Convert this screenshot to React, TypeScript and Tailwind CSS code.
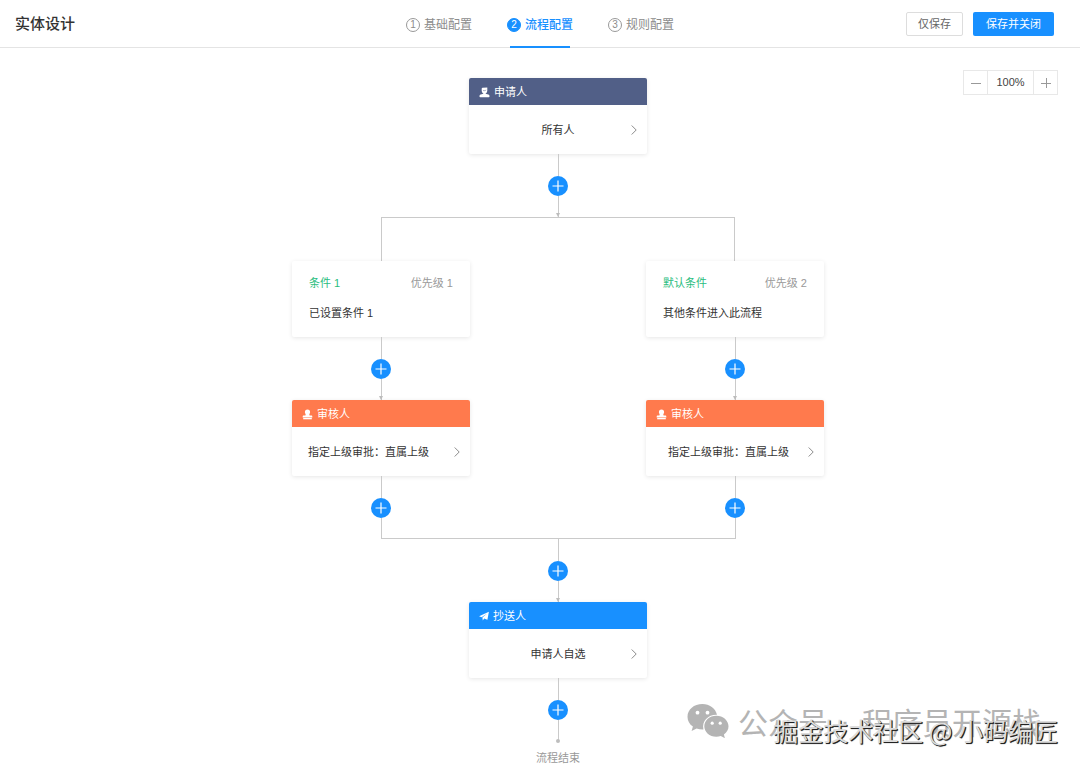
import type { ReactNode } from 'react';

const NODE_WIDTH = 'w-[178px]';

function ApplicantIcon() {
  return (
    <svg viewBox="0 0 11 11" className="size-[11px]" fill="currentColor" aria-hidden="true">
      <path d="M3.600.8 8.300.4v3.200c0 1.600-.9 2.800-1.900 3.200l3 .7c.7.200 1.100.7 1.100 1.400v.6c0 .4-.3.7-.7.7H1.200a.7.700 0 0 1-.7-.7v-.6c0-.7.4-1.200 1.100-1.400l3-.7C3.500 6.400 2.700 5.200 2.700 3.600V1.900c0-.6.3-1 .9-1.100Z" />
      <path d="M4 3.400c1.200.5 2.300.3 3.200-.5" fill="none" stroke="#515f87" strokeWidth=".5" />
    </svg>
  );
}

function StampIcon() {
  return (
    <svg viewBox="0 0 11 11" className="size-[11px]" fill="currentColor" aria-hidden="true">
      <path d="M5.500.6a2.600 2.600 0 0 1 2.600 2.600c0 1-.8 1.700-.8 2.600 0 .4.200.6.600.6h1.400c.6 0 1 .4 1 1v1H.7v-1c0-.6.4-1 1-1h1.400c.4 0 .6-.2.6-.6 0-.9-.8-1.600-.8-2.600A2.600 2.600 0 0 1 5.500.6Z" />
      <path d="M1.200 9h8.600v1.300H1.200z" />
    </svg>
  );
}

function PlaneIcon() {
  return (
    <svg viewBox="0 0 10 10" className="size-[10px]" fill="currentColor" aria-hidden="true">
      <path d="M9.900.8 8.400 8.800 5.200 7.400 3.800 9.500 3.400 6.600 8.200 2.500 2.600 6.200.1 5.200Z" />
    </svg>
  );
}

function Chevron() {
  return (
    <svg viewBox="0 0 6 10" className="h-[10px] w-[6px]" fill="none" stroke="#8c8c8c" aria-hidden="true">
      <path d="M.7.5 5.200 5 .7 9.500" />
    </svg>
  );
}

function Connector({ arrow = false }: { arrow?: boolean }) {
  return (
    <div className="flex h-[63px] flex-col items-center">
      <span className="w-px flex-1 bg-[#cacaca]" />
      <button
        type="button"
        aria-label="添加节点"
        className="flex size-5 items-center justify-center rounded-full bg-[#1890ff] text-white"
      >
        <svg viewBox="0 0 12 12" className="size-3" stroke="currentColor" strokeWidth="1.2" aria-hidden="true">
          <path d="M6 .5v11M.5 6h11" />
        </svg>
      </button>
      <span className="flex w-px flex-1 flex-col items-center justify-end bg-[#cacaca]">
        {arrow && (
          <svg viewBox="0 0 4 4" className="size-1 shrink-0" fill="#bdbdbd" aria-hidden="true">
            <path d="M0 0h4L2 4Z" />
          </svg>
        )}
      </span>
    </div>
  );
}

type Align = 'center' | 'start' | 'indent';

const ALIGN: Record<Align, string> = {
  center: 'justify-center pl-4',
  start: 'justify-start pl-4',
  indent: 'justify-start pl-[22px]',
};

function Node({ title, tone, icon, children, align = 'center' }: {
  title: string;
  tone: string;
  icon: ReactNode;
  children: ReactNode;
  align?: Align;
}) {
  return (
    <section className={`${NODE_WIDTH} rounded-[2px] bg-white shadow-[0_1px_4px_rgba(0,0,0,0.1)]`}>
      <h2 className={`flex h-[27px] items-center gap-1 rounded-t-[2px] px-[10px] pt-px text-[11px] text-white ${tone}`}>
        {icon}
        {title}
      </h2>
      <button type="button" className="flex h-[49px] w-full items-center pt-px pr-[10px] text-[11px] text-[#333]">
        <span className={`flex flex-1 ${ALIGN[align]}`}>{children}</span>
        <Chevron />
      </button>
    </section>
  );
}

function ConditionCard({ name, priority, text }: { name: string; priority: string; text: string }) {
  return (
    <section className={`${NODE_WIDTH} h-[76px] rounded-[2px] bg-white px-[17px] pt-3 text-[11px] shadow-[0_1px_4px_rgba(0,0,0,0.1)]`}>
      <div className="flex h-5 items-center justify-between">
        <h2 className="text-[#2bbd7e]">{name}</h2>
        <span className="text-[#999]">{priority}</span>
      </div>
      <p className="mt-[10px] flex h-5 items-center text-[#333]">{text}</p>
    </section>
  );
}

function Branch({ side, name, priority, text }: {
  side: 'left' | 'right';
  name: string;
  priority: string;
  text: string;
}) {
  const left = side === 'left';
  return (
    <div className="flex w-[354px] flex-col items-center">
      <div className={`flex h-11 w-full ${left ? 'justify-end' : 'justify-start'}`}>
        <span className={`w-1/2 border-t border-[#cacaca] ${left ? 'border-l' : 'border-r'}`} />
      </div>
      <ConditionCard name={name} priority={priority} text={text} />
      <Connector arrow />
      <Node title="审核人" tone="bg-[#ff7a4d]" icon={<StampIcon />} align={left ? 'start' : 'indent'}>
        指定上级审批：直属上级
      </Node>
      <Connector />
      <div className={`-mt-px flex h-px w-full ${left ? 'justify-end' : 'justify-start'}`}>
        <span className="w-1/2 bg-[#cacaca]" />
      </div>
    </div>
  );
}

function Step({ index, label, active = false }: { index: number; label: string; active?: boolean }) {
  return (
    <a
      href="#"
      aria-current={active ? 'step' : undefined}
      className={`flex h-12 flex-col items-center text-xs ${active ? 'font-medium text-[#1890ff]' : 'text-[#8c8c8c]'}`}
    >
      <span className="flex flex-1 items-center gap-1 pt-[3px]">
        <span
          className={`flex size-[14px] items-center justify-center rounded-full border text-[10px] leading-none ${
            active ? 'border-[#1890ff] bg-[#1890ff] text-white' : 'border-[#999]'
          }`}
        >
          {index}
        </span>
        {label}
      </span>
      <span className={`h-[2px] w-[60px] ${active ? 'bg-[#1890ff]' : 'bg-transparent'}`} />
    </a>
  );
}

function Watermark() {
  return (
    <div className="pointer-events-none absolute right-[22px] bottom-[24px] h-[40px] w-[371px] font-['Noto_Sans_CJK_SC',sans-serif]">
      <div className="flex items-start text-[30px] leading-[34px] text-[#b4b4b4]">
        <svg viewBox="0 0 42 34" className="mr-[9px] h-[34px] w-[42px] shrink-0" fill="currentColor" aria-hidden="true">
          <path d="M15.500 0C7 0 .5 5.500.5 12.700c0 4 2 7.500 5.400 9.900L4.600 27l5-2.600c1.900.6 3.900 1 6 1h.8C14.600 16.800 21.500 10.400 30 10.800 28.600 4.300 22.400 0 15.500 0Z" />
          <path d="M29.300 11.800c-6.800 0-12 4.700-12 10.500s5.200 10.500 12 10.500c1.600 0 3.100-.3 4.500-.7l4.100 2.100-1-3.700c2.900-2 4.600-4.900 4.600-8.200 0-5.800-5.400-10.500-12.200-10.500Z" />
          <g fill="white">
            <circle cx="10.500" cy="8.700" r="1.900" />
            <circle cx="20.500" cy="8.700" r="1.900" />
            <circle cx="25.200" cy="19.200" r="1.600" />
            <circle cx="33.200" cy="19.200" r="1.600" />
          </g>
        </svg>
        <span>公众号</span>
        <span className="w-[34px] text-center font-['Liberation_Sans']">·</span>
        <span>程序员开源栈</span>
      </div>
      <p className="absolute right-0 bottom-0 text-[25px] leading-[28px] whitespace-nowrap text-[#dcdcdc] [text-shadow:1px_1px_0_#222,1px_1px_1px_#333]">
        掘金技术社区 @ 小码编匠
      </p>
    </div>
  );
}

export default function App() {
  return (
    <div className="relative min-h-screen overflow-hidden bg-white font-['Liberation_Sans','Noto_Sans_CJK_SC',sans-serif]">
      <header className="grid h-12 grid-cols-[1fr_auto_1fr] border-b border-[#e4e4e4]">
        <h1 className="flex items-center pl-[15px] text-[15px] font-medium text-[#333]">实体设计</h1>
        <nav className="flex gap-[35px]">
          <Step index={1} label="基础配置" />
          <Step index={2} label="流程配置" active />
          <Step index={3} label="规则配置" />
        </nav>
        <div className="flex items-center justify-end gap-[10px] pr-[26px] text-[11px]">
          <button type="button" className="h-6 rounded-[2px] border border-[#ddd] px-[11px] text-[#666]">
            仅保存
          </button>
          <button type="button" className="h-6 rounded-[2px] bg-[#1890ff] px-[13px] text-white">
            保存并关闭
          </button>
        </div>
      </header>

      <div
        className="absolute top-[70px] right-[22px] flex h-[25px] border border-[#e8e8e8] text-[#999]"
        role="group"
        aria-label="缩放"
      >
        <button type="button" aria-label="缩小" className="flex w-[23px] items-center justify-center">
          <svg viewBox="0 0 10 10" className="size-[10px]" stroke="currentColor" aria-hidden="true">
            <path d="M0 5.500h10" />
          </svg>
        </button>
        <span className="flex w-[47px] items-center justify-center border-x border-[#e8e8e8] text-[11px] text-[#444]">
          100%
        </span>
        <button type="button" aria-label="放大" className="flex w-[23px] items-center justify-center">
          <svg viewBox="0 0 10 10" className="size-[10px]" stroke="currentColor" aria-hidden="true">
            <path d="M0 5.500h10M5.500 0v10" />
          </svg>
        </button>
      </div>

      <main className="flex flex-col items-center pt-[30px] pl-9">
        <Node title="申请人" tone="bg-[#515f87]" icon={<ApplicantIcon />}>
          所有人
        </Node>
        <Connector arrow />
        <div className="flex">
          <Branch side="left" name="条件 1" priority="优先级 1" text="已设置条件 1" />
          <Branch side="right" name="默认条件" priority="优先级 2" text="其他条件进入此流程" />
        </div>
        <Connector arrow />
        <Node title="抄送人" tone="bg-[#1890ff]" icon={<PlaneIcon />}>
          申请人自选
        </Node>
        <Connector />
        <span className="-mt-[2px] size-1 rounded-full bg-[#bdbdbd]" />
        <p className="mt-[7px] text-[11px] leading-4 text-[#999]">流程结束</p>
      </main>

      <Watermark />
    </div>
  );
}
